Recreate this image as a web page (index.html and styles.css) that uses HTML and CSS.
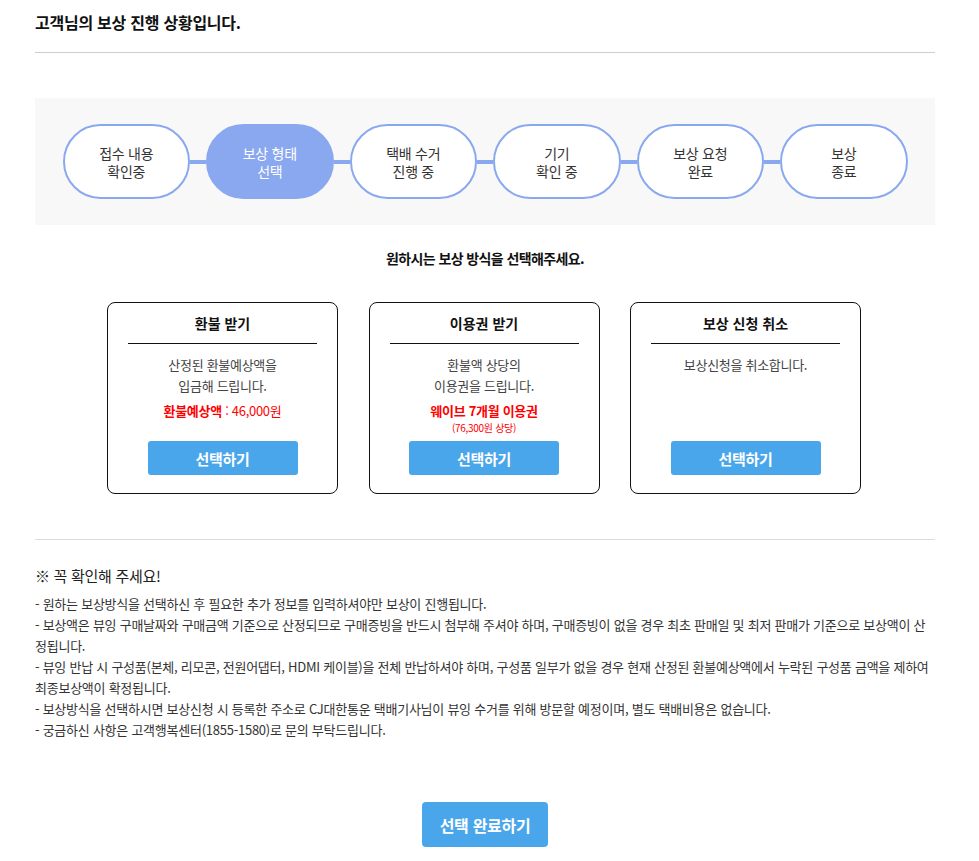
FILE: index.html
```html
<!DOCTYPE html>
<html lang="ko">
<head>
<meta charset="utf-8">
<title>보상 진행 상황</title>
<link rel="stylesheet" href="styles.css">
</head>
<body>
<div class="page">
  <h1 class="page-title">고객님의 보상 진행 상황입니다.</h1>
  <hr class="divider">

  <div class="steps">
    <div class="step">접수 내용<br>확인중</div>
    <div class="connector"></div>
    <div class="step active">보상 형태<br>선택</div>
    <div class="connector"></div>
    <div class="step">택배 수거<br>진행 중</div>
    <div class="connector"></div>
    <div class="step">기기<br>확인 중</div>
    <div class="connector"></div>
    <div class="step">보상 요청<br>완료</div>
    <div class="connector"></div>
    <div class="step">보상<br>종료</div>
  </div>

  <p class="choose">원하시는 보상 방식을 선택해주세요.</p>

  <div class="cards">
    <div class="card">
      <div class="card-title">환불 받기</div>
      <p class="card-desc">산정된 환불예상액을<br>입금해 드립니다.</p>
      <p class="card-red"><b>환불예상액</b> : 46,000원</p>
      <button class="btn">선택하기</button>
    </div>
    <div class="card">
      <div class="card-title">이용권 받기</div>
      <p class="card-desc">환불액 상당의<br>이용권을 드립니다.</p>
      <p class="card-red"><b>웨이브 7개월 이용권</b></p>
      <p class="card-small">(76,300원 상당)</p>
      <button class="btn">선택하기</button>
    </div>
    <div class="card">
      <div class="card-title">보상 신청 취소</div>
      <p class="card-desc">보상신청을 취소합니다.</p>
      <button class="btn">선택하기</button>
    </div>
  </div>

  <hr class="divider light">

  <div class="notice">
    <p class="notice-title">※ 꼭 확인해 주세요!</p>
    <ul class="notice-list">
      <li>- 원하는 보상방식을 선택하신 후 필요한 추가 정보를 입력하셔야만 보상이 진행됩니다.</li>
      <li>- 보상액은 뷰잉 구매날짜와 구매금액 기준으로 산정되므로 구매증빙을 반드시 첨부해 주셔야 하며, 구매증빙이 없을 경우 최초 판매일 및 최저 판매가 기준으로 보상액이 산정됩니다.</li>
      <li>- 뷰잉 반납 시 구성품(본체, 리모콘, 전원어댑터, HDMI 케이블)을 전체 반납하셔야 하며, 구성품 일부가 없을 경우 현재 산정된 환불예상액에서 누락된 구성품 금액을 제하여 최종보상액이 확정됩니다.</li>
      <li>- 보상방식을 선택하시면 보상신청 시 등록한 주소로 CJ대한통운 택배기사님이 뷰잉 수거를 위해 방문할 예정이며, 별도 택배비용은 없습니다.</li>
      <li>- 궁금하신 사항은 고객행복센터(1855-1580)로 문의 부탁드립니다.</li>
    </ul>
  </div>

  <div class="submit-wrap">
    <button class="btn btn-submit">선택 완료하기</button>
  </div>
</div>
</body>
</html>
```
FILE: styles.css
```css
* { box-sizing: border-box; }
html, body { margin: 0; padding: 0; background: #fff; }
body {
  font-family: "Noto Sans CJK KR", "Noto Sans", sans-serif;
  color: #222;
}
.page {
  width: 900px;
  margin-left: 35px;
  padding-top: 12px;
}
.page-title {
  margin: 0;
  font-size: 16px;
  line-height: 20px;
  font-weight: 700;
  color: #111;
  letter-spacing: -0.25px;
}
.divider {
  margin: 20px 0 0;
  border: 0;
  border-top: 1px solid #cfcfcf;
  height: 0;
}
.divider.light { border-top-color: #dcdcdc; margin-top: 45px; }

.steps {
  margin-top: 45px;
  height: 127px;
  background: #f8f8f8;
  display: flex;
  align-items: center;
  justify-content: center;
}
.step {
  width: 127.5px;
  height: 75px;
  border: 2px solid #8aa8f0;
  border-radius: 38px;
  background: #fff;
  display: flex;
  align-items: center;
  justify-content: center;
  text-align: center;
  font-size: 14px;
  line-height: 18px;
  color: #333;
  letter-spacing: -0.3px;
}
.step.active {
  background: #8aa8f0;
  color: #fff;
}
.connector {
  width: 16px;
  height: 4px;
  background: #8aa8f0;
}

.choose {
  margin: 23px 0 0;
  text-align: center;
  font-size: 14px;
  line-height: 20px;
  font-weight: 700;
  color: #111;
  letter-spacing: -0.6px;
}

.cards {
  margin-top: 34px;
  display: flex;
  justify-content: center;
  gap: 30.5px;
  padding-right: 2px;
}
.card {
  width: 231px;
  border: 1px solid #111;
  border-radius: 8px;
  padding: 10px 20px 18px;
  display: flex;
  flex-direction: column;
  align-items: center;
  text-align: center;
}
.card-title {
  align-self: stretch;
  font-size: 14px;
  line-height: 20px;
  font-weight: 700;
  color: #111;
  padding-bottom: 10px;
  border-bottom: 1px solid #111;
}
.card-desc {
  margin: 10px 0 0;
  font-size: 13px;
  line-height: 21px;
  color: #444;
  letter-spacing: -0.3px;
}
.card-red {
  margin: 5px 0 0;
  font-size: 13px;
  line-height: 20px;
  color: #ff0000;
  letter-spacing: -0.3px;
}
.card-red b { font-weight: 700; }
.card-small {
  margin: 0 0 6px;
  font-size: 10px;
  line-height: 14px;
  color: #ff0000;
  letter-spacing: -0.3px;
}
.btn {
  font-family: inherit;
  border: 0;
  border-radius: 3px;
  background: #4aa6ea;
  color: #fff;
  font-weight: 700;
  cursor: pointer;
}
.card .btn {
  margin-top: auto;
  width: 150px;
  height: 34px;
  font-size: 15px;
  letter-spacing: -0.3px;
}

.notice { margin-top: 26px; }
.notice-title {
  margin: 0;
  font-size: 15px;
  line-height: 20px;
  color: #222;
  letter-spacing: -0.3px;
}
.notice-list {
  list-style: none;
  margin: 7px 0 0;
  padding: 0;
  font-size: 13px;
  line-height: 21px;
  color: #333;
  letter-spacing: -0.25px;
}
.submit-wrap {
  margin-top: 62px;
  display: flex;
  justify-content: center;
}
.btn-submit {
  width: 126px;
  height: 45px;
  font-size: 16px;
  letter-spacing: -0.3px;
  border-radius: 4px;
}
```
